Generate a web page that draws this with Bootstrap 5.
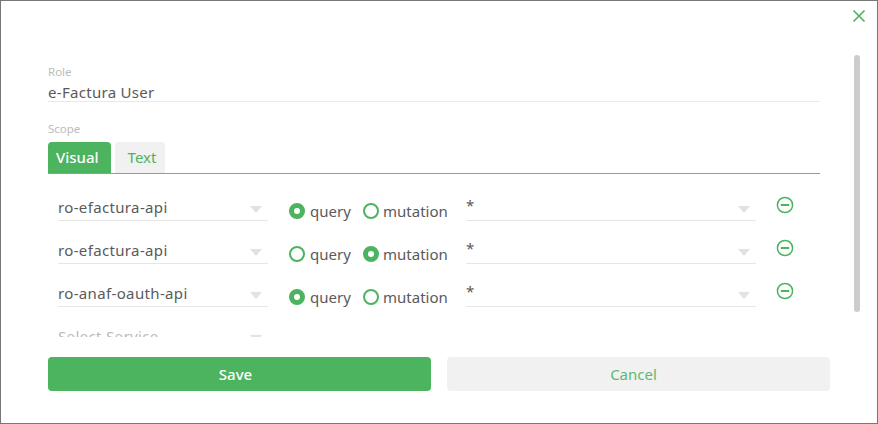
<!DOCTYPE html>
<html lang="en">
<head>
<meta charset="utf-8">
<title>Role</title>
<link rel="stylesheet" href="https://cdn.jsdelivr.net/npm/bootstrap@5.3.0/dist/css/bootstrap.min.css">
<style>
html,body{height:100%;margin:0;background:#fff;overflow:hidden}
body{font-family:"Noto Sans","Liberation Sans",sans-serif;color:#5a5a5a}
.dlg{width:878px;height:424px;border:1px solid #777;position:relative;background:#fff}
.x-btn{position:absolute;top:8px;right:11px;width:14px;height:14px;padding:0;border:0;background:none;line-height:0}
.scroller{height:282px;margin-top:54px;padding-left:47px}
.form-col{width:772px;flex:none;overflow:hidden;padding-top:10px}
.thumb{width:6px;height:257px;margin-left:34px;background:#ccc;border-radius:3px;flex:none}
.lbl{font-size:11.5px;line-height:14px;color:#bbb}
.val{font-size:15px;line-height:20px;border-bottom:1px solid #e9e9e9;height:23px;padding-top:3px;letter-spacing:.3px}
.scope{margin-top:20px}
.tabbar{border-bottom:1px solid #62bd73;margin-top:6px;gap:4px;height:32px}
.tb{font-size:15px;font-weight:500;border-radius:4px 4px 0 0;height:31px;line-height:30px;text-align:center}
.tb-on{width:63px;background:#4cb35f;color:#fff;text-align:left;padding-left:8px}
.tb-off{width:50px;background:#f1f1f1;color:#4cb35f;font-weight:400;padding-left:4px}
.rows{padding-left:10px;padding-top:16px}
.svc-row{height:43px;align-items:flex-start}
.sel{position:relative;border-bottom:1px solid #e6e6e6;height:31px;font-size:15px;line-height:20px;padding-top:7px;letter-spacing:.35px}
.sel-a{width:210px}
.sel-b{width:290px;padding-top:5px}
.sel-ph{color:#bbb}
.tri{position:absolute;right:6px;top:16px;width:0;height:0;border-left:6px solid transparent;border-right:6px solid transparent;border-top:7px solid #e2e2e2}
.radios{margin-left:21px;font-size:15px;width:177px;padding-top:11px;line-height:20px}
.rd{width:16px;height:16px;border-radius:50%;border:2px solid #4cb35f;margin-right:5px;flex:none;background:#fff}
.rd-on{border-width:5px}
.rdgroup{width:74px}
.mut{margin-left:-1px}
.minus{margin-left:20px;margin-top:6px;line-height:0}
.foot{gap:16px;margin-top:20px;padding-left:47px}
.bt{width:383px;height:34px;border-radius:4px;border:0;font-size:15px;font-weight:500;padding:0}
.bt-save{background:#4cb35f;color:#fff;padding-right:8px}
.bt-cancel{background:#f1f1f1;color:#5cba6d;font-weight:400;padding-right:10px}
</style>
</head>
<body>
<div class="dlg d-flex flex-column">
  <button class="x-btn" aria-label="Close"><svg width="14" height="14" viewBox="0 0 14 14"><path d="M1.5 1.5l11 11M12.5 1.5l-11 11" stroke="#4cb35f" stroke-width="1.7" fill="none"/></svg></button>
  <div class="scroller d-flex">
    <div class="form-col">
      <div class="lbl">Role</div>
      <div class="val">e-Factura User</div>
      <div class="lbl scope">Scope</div>
      <div class="tabbar d-flex">
        <div class="tb tb-on">Visual</div>
        <div class="tb tb-off">Text</div>
      </div>
      <div class="rows">
        <div class="svc-row d-flex">
          <div class="sel sel-a">ro-efactura-api<span class="tri"></span></div>
          <div class="radios d-flex">
            <div class="rdgroup d-flex align-items-center"><span class="rd rd-on"></span>query</div>
            <div class="d-flex align-items-center"><span class="rd"></span><span class="mut">mutation</span></div>
          </div>
          <div class="sel sel-b">*<span class="tri"></span></div>
          <div class="minus"><svg width="18" height="18" viewBox="0 0 18 18"><circle cx="9" cy="9" r="7.6" fill="none" stroke="#4cb35f" stroke-width="1.5"/><path d="M4.8 9h8.4" stroke="#4cb35f" stroke-width="2"/></svg></div>
        </div>
        <div class="svc-row d-flex">
          <div class="sel sel-a">ro-efactura-api<span class="tri"></span></div>
          <div class="radios d-flex">
            <div class="rdgroup d-flex align-items-center"><span class="rd"></span>query</div>
            <div class="d-flex align-items-center"><span class="rd rd-on"></span><span class="mut">mutation</span></div>
          </div>
          <div class="sel sel-b">*<span class="tri"></span></div>
          <div class="minus"><svg width="18" height="18" viewBox="0 0 18 18"><circle cx="9" cy="9" r="7.6" fill="none" stroke="#4cb35f" stroke-width="1.5"/><path d="M4.8 9h8.4" stroke="#4cb35f" stroke-width="2"/></svg></div>
        </div>
        <div class="svc-row d-flex">
          <div class="sel sel-a">ro-anaf-oauth-api<span class="tri"></span></div>
          <div class="radios d-flex">
            <div class="rdgroup d-flex align-items-center"><span class="rd rd-on"></span>query</div>
            <div class="d-flex align-items-center"><span class="rd"></span><span class="mut">mutation</span></div>
          </div>
          <div class="sel sel-b">*<span class="tri"></span></div>
          <div class="minus"><svg width="18" height="18" viewBox="0 0 18 18"><circle cx="9" cy="9" r="7.6" fill="none" stroke="#4cb35f" stroke-width="1.5"/><path d="M4.8 9h8.4" stroke="#4cb35f" stroke-width="2"/></svg></div>
        </div>
        <div class="svc-row d-flex">
          <div class="sel sel-a sel-ph">Select Service<span class="tri"></span></div>
        </div>
      </div>
    </div>
    <div class="thumb"></div>
  </div>
  <div class="foot d-flex">
    <button class="bt bt-save">Save</button>
    <button class="bt bt-cancel">Cancel</button>
  </div>
</div>
<script src="https://cdn.jsdelivr.net/npm/bootstrap@5.3.0/dist/js/bootstrap.bundle.min.js"></script>
</body>
</html>
